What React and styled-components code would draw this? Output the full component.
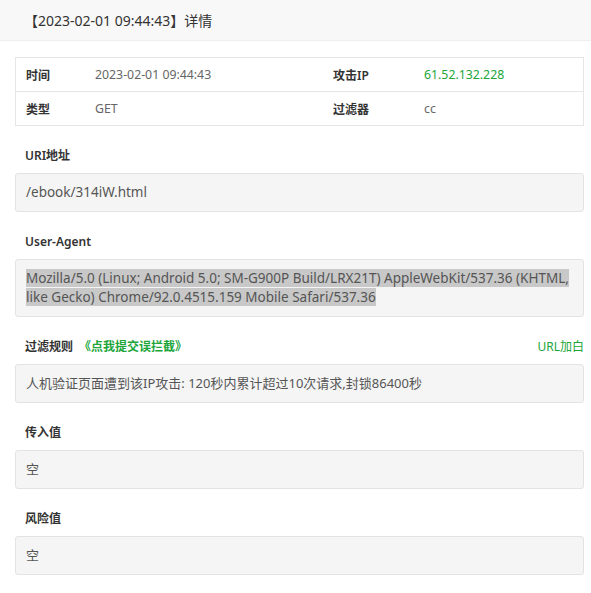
import React from "react";
import styled, { createGlobalStyle } from "styled-components";

const GlobalStyle = createGlobalStyle`
	html, body {
		margin: 0;
		padding: 0;
		background: #fff;
		font-family: "Segoe UI", "Noto Sans", "Noto Sans CJK SC", sans-serif;
		color: #333;
	}
`;

const Header = styled.div`
	height: 41px;
	box-sizing: border-box;
	padding-left: 24px;
	display: flex;
	align-items: center;
	background: #f8f8f8;
	border-bottom: 1px solid #eee;
	font-size: 14px;
	color: #333;
`;

const Body = styled.div`
	padding: 16px 7px 16px 15px;
`;

const InfoTable = styled.div`
	display: grid;
	grid-template-columns: 69px 238px 91px 1fr;
	border: 1px solid #e6e6e6;
`;

const Cell = styled.div`
	height: 33px;
	display: flex;
	align-items: center;
	padding-left: 10px;
	font-size: ${p => (p.$label ? "12px" : "12.3px")};
	font-weight: ${p => (p.$label ? 600 : 400)};
	color: ${p => (p.$green ? "#20a53a" : p.$label ? "#333" : "#666")};
	border-top: ${p => (p.$first ? "none" : "1px solid #e6e6e6")};
`;

const SectionHead = styled.div`
	display: flex;
	justify-content: space-between;
	align-items: center;
	margin-top: 19px;
	height: 20px;
	padding-left: 10px;
	font-size: 12px;
`;

const Title = styled.span`
	font-weight: 600;
	color: #333;
`;

const Link = styled.a`
	color: #20a53a;
	font-weight: 600;
	margin-left: 6px;
	text-decoration: none;
`;

const Action = styled.a`
	color: #20a53a;
	text-decoration: none;
	font-size: 12px;
`;

const ValueBox = styled.div`
	margin-top: 8px;
	padding: 9px 10px;
	border: 1px solid #e3e3e3;
	border-radius: 3px;
	background: #f5f5f5;
	font-size: ${p => (p.$cjk ? "13px" : "13.5px")};
	line-height: 19px;
	height: ${p => p.$lines * 19}px;
	color: #555;
	word-break: break-word;
`;

const Mark = styled.span`
	background: #c8c8c8;
`;

export default function App() {
	return (
		<>
			<GlobalStyle />
			<Header>【2023-02-01 09:44:43】详情</Header>
			<Body>
				<InfoTable>
					<Cell $label $first>时间</Cell>
					<Cell $first>2023-02-01 09:44:43</Cell>
					<Cell $label $first>攻击IP</Cell>
					<Cell $first $green>61.52.132.228</Cell>
					<Cell $label>类型</Cell>
					<Cell>GET</Cell>
					<Cell $label>过滤器</Cell>
					<Cell>cc</Cell>
				</InfoTable>

				<SectionHead><Title>URI地址</Title></SectionHead>
				<ValueBox $lines={1}>/ebook/314iW.html</ValueBox>

				<SectionHead><Title>User-Agent</Title></SectionHead>
				<ValueBox $lines={2}>
					<Mark>Mozilla/5.0 (Linux; Android 5.0; SM-G900P Build/LRX21T) AppleWebKit/537.36 (KHTML, like Gecko) Chrome/92.0.4515.159 Mobile Safari/537.36</Mark>
				</ValueBox>

				<SectionHead>
					<span>
						<Title>过滤规则</Title>
						<Link>《点我提交误拦截》</Link>
					</span>
					<Action>URL加白</Action>
				</SectionHead>
				<ValueBox $cjk $lines={1}>人机验证页面遭到该IP攻击: 120秒内累计超过10次请求,封锁86400秒</ValueBox>

				<SectionHead><Title>传入值</Title></SectionHead>
				<ValueBox $cjk $lines={1}>空</ValueBox>

				<SectionHead><Title>风险值</Title></SectionHead>
				<ValueBox $cjk $lines={1}>空</ValueBox>
			</Body>
		</>
	);
}
